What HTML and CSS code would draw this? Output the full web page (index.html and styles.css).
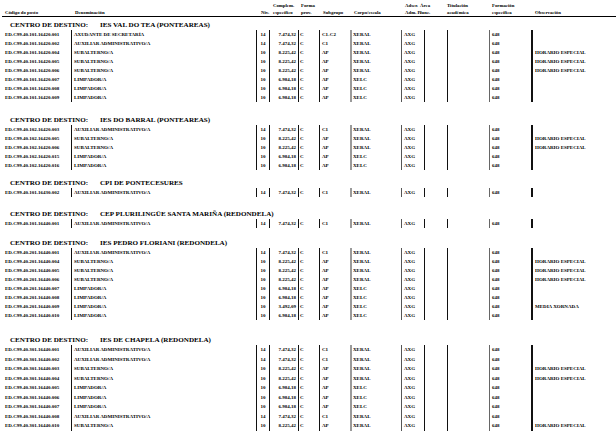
FILE: index.html
```html
<!DOCTYPE html>
<html lang="gl">
<head>
<meta charset="utf-8">
<title>Postos por centro de destino</title>
<link rel="stylesheet" href="styles.css">
</head>
<body>
<div class="page">
  <div class="head">
    <span class="h h-comp1">Complem.</span>
    <span class="h h-forma1">Forma</span>
    <span class="h h-adscr1">Adscr.</span>
    <span class="h h-area1">Área</span>
    <span class="h h-tit1">Titulación</span>
    <span class="h h-form1">Formación</span>
    <span class="h h-cod">Código do posto</span>
    <span class="h h-den">Denominación</span>
    <span class="h h-niv">Niv.</span>
    <span class="h h-comp2">específico</span>
    <span class="h h-forma2">prov.</span>
    <span class="h h-sub">Subgrupo</span>
    <span class="h h-corpo">Corpo/escala</span>
    <span class="h h-adscr2">Adm. P.</span>
    <span class="h h-area2">func.</span>
    <span class="h h-tit2">académica</span>
    <span class="h h-form2">específica</span>
    <span class="h h-obs">Observación</span>
  </div>

  <section class="group g1">
    <h2 class="title"><span class="label">CENTRO DE DESTINO:</span><span class="name">IES VAL DO TEA (PONTEAREAS)</span></h2>
    <div class="rows">
      <div class="c code">ED.C99.40.101.16420.001</div><div class="c den">AXUDANTE DE SECRETARÍA</div><div class="c niv">14</div><div class="c comp">7.474,32</div><div class="c forma">C</div><div class="c sub">C1-C2</div><div class="c corpo">XERAL</div><div class="c adscr">AXG</div><div class="c area"></div><div class="c tit"></div><div class="c form">648</div><div class="c obs"></div>
      <div class="c code">ED.C99.40.101.16420.002</div><div class="c den">AUXILIAR ADMINISTRATIVO/A</div><div class="c niv">14</div><div class="c comp">7.474,32</div><div class="c forma">C</div><div class="c sub">C1</div><div class="c corpo">XERAL</div><div class="c adscr">AXG</div><div class="c area"></div><div class="c tit"></div><div class="c form">648</div><div class="c obs"></div>
      <div class="c code">ED.C99.40.101.16420.004</div><div class="c den">SUBALTERNO/A</div><div class="c niv">10</div><div class="c comp">8.225,42</div><div class="c forma">C</div><div class="c sub">AP</div><div class="c corpo">XERAL</div><div class="c adscr">AXG</div><div class="c area"></div><div class="c tit"></div><div class="c form">648</div><div class="c obs">HORARIO ESPECIAL</div>
      <div class="c code">ED.C99.40.101.16420.005</div><div class="c den">SUBALTERNO/A</div><div class="c niv">10</div><div class="c comp">8.225,42</div><div class="c forma">C</div><div class="c sub">AP</div><div class="c corpo">XERAL</div><div class="c adscr">AXG</div><div class="c area"></div><div class="c tit"></div><div class="c form">648</div><div class="c obs">HORARIO ESPECIAL</div>
      <div class="c code">ED.C99.40.101.16420.006</div><div class="c den">SUBALTERNO/A</div><div class="c niv">10</div><div class="c comp">8.225,42</div><div class="c forma">C</div><div class="c sub">AP</div><div class="c corpo">XERAL</div><div class="c adscr">AXG</div><div class="c area"></div><div class="c tit"></div><div class="c form">648</div><div class="c obs">HORARIO ESPECIAL</div>
      <div class="c code">ED.C99.40.101.16420.007</div><div class="c den">LIMPADOR/A</div><div class="c niv">10</div><div class="c comp">6.984,18</div><div class="c forma">C</div><div class="c sub">AP</div><div class="c corpo">XELC</div><div class="c adscr">AXG</div><div class="c area"></div><div class="c tit"></div><div class="c form">648</div><div class="c obs"></div>
      <div class="c code">ED.C99.40.101.16420.008</div><div class="c den">LIMPADOR/A</div><div class="c niv">10</div><div class="c comp">6.984,18</div><div class="c forma">C</div><div class="c sub">AP</div><div class="c corpo">XELC</div><div class="c adscr">AXG</div><div class="c area"></div><div class="c tit"></div><div class="c form">648</div><div class="c obs"></div>
      <div class="c code">ED.C99.40.101.16420.009</div><div class="c den">LIMPADOR/A</div><div class="c niv">10</div><div class="c comp">6.984,18</div><div class="c forma">C</div><div class="c sub">AP</div><div class="c corpo">XELC</div><div class="c adscr">AXG</div><div class="c area"></div><div class="c tit"></div><div class="c form">648</div><div class="c obs"></div>
    </div>
  </section>

  <section class="group g2">
    <h2 class="title"><span class="label">CENTRO DE DESTINO:</span><span class="name">IES DO BARRAL (PONTEAREAS)</span></h2>
    <div class="rows">
      <div class="c code">ED.C99.40.102.16420.003</div><div class="c den">AUXILIAR ADMINISTRATIVO/A</div><div class="c niv">14</div><div class="c comp">7.474,32</div><div class="c forma">C</div><div class="c sub">C1</div><div class="c corpo">XERAL</div><div class="c adscr">AXG</div><div class="c area"></div><div class="c tit"></div><div class="c form">648</div><div class="c obs"></div>
      <div class="c code">ED.C99.40.102.16420.005</div><div class="c den">SUBALTERNO/A</div><div class="c niv">10</div><div class="c comp">8.225,42</div><div class="c forma">C</div><div class="c sub">AP</div><div class="c corpo">XERAL</div><div class="c adscr">AXG</div><div class="c area"></div><div class="c tit"></div><div class="c form">648</div><div class="c obs">HORARIO ESPECIAL</div>
      <div class="c code">ED.C99.40.102.16420.006</div><div class="c den">SUBALTERNO/A</div><div class="c niv">10</div><div class="c comp">8.225,42</div><div class="c forma">C</div><div class="c sub">AP</div><div class="c corpo">XERAL</div><div class="c adscr">AXG</div><div class="c area"></div><div class="c tit"></div><div class="c form">648</div><div class="c obs">HORARIO ESPECIAL</div>
      <div class="c code">ED.C99.40.102.16420.015</div><div class="c den">LIMPADOR/A</div><div class="c niv">10</div><div class="c comp">6.984,18</div><div class="c forma">C</div><div class="c sub">AP</div><div class="c corpo">XELC</div><div class="c adscr">AXG</div><div class="c area"></div><div class="c tit"></div><div class="c form">648</div><div class="c obs"></div>
      <div class="c code">ED.C99.40.102.16420.016</div><div class="c den">LIMPADOR/A</div><div class="c niv">10</div><div class="c comp">6.984,18</div><div class="c forma">C</div><div class="c sub">AP</div><div class="c corpo">XELC</div><div class="c adscr">AXG</div><div class="c area"></div><div class="c tit"></div><div class="c form">648</div><div class="c obs"></div>
    </div>
  </section>

  <section class="group g3">
    <h2 class="title"><span class="label">CENTRO DE DESTINO:</span><span class="name">CPI DE PONTECESURES</span></h2>
    <div class="rows">
      <div class="c code">ED.C99.40.101.16430.002</div><div class="c den">AUXILIAR ADMINISTRATIVO/A</div><div class="c niv">14</div><div class="c comp">7.474,32</div><div class="c forma">C</div><div class="c sub">C1</div><div class="c corpo">XERAL</div><div class="c adscr">AXG</div><div class="c area"></div><div class="c tit"></div><div class="c form">648</div><div class="c obs"></div>
    </div>
  </section>

  <section class="group g4">
    <h2 class="title"><span class="label">CENTRO DE DESTINO:</span><span class="name">CEP PLURILINGÜE SANTA MARIÑA (REDONDELA)</span></h2>
    <div class="rows">
      <div class="c code">ED.C99.40.101.16440.001</div><div class="c den">AUXILIAR ADMINISTRATIVO/A</div><div class="c niv">14</div><div class="c comp">7.474,32</div><div class="c forma">C</div><div class="c sub">C1</div><div class="c corpo">XERAL</div><div class="c adscr">AXG</div><div class="c area"></div><div class="c tit"></div><div class="c form">648</div><div class="c obs"></div>
    </div>
  </section>

  <section class="group g5">
    <h2 class="title"><span class="label">CENTRO DE DESTINO:</span><span class="name">IES PEDRO FLORIANI (REDONDELA)</span></h2>
    <div class="rows">
      <div class="c code">ED.C99.40.201.16440.001</div><div class="c den">AUXILIAR ADMINISTRATIVO/A</div><div class="c niv">14</div><div class="c comp">7.474,32</div><div class="c forma">C</div><div class="c sub">C1</div><div class="c corpo">XERAL</div><div class="c adscr">AXG</div><div class="c area"></div><div class="c tit"></div><div class="c form">648</div><div class="c obs"></div>
      <div class="c code">ED.C99.40.201.16440.004</div><div class="c den">SUBALTERNO/A</div><div class="c niv">10</div><div class="c comp">8.225,42</div><div class="c forma">C</div><div class="c sub">AP</div><div class="c corpo">XERAL</div><div class="c adscr">AXG</div><div class="c area"></div><div class="c tit"></div><div class="c form">648</div><div class="c obs">HORARIO ESPECIAL</div>
      <div class="c code">ED.C99.40.201.16440.005</div><div class="c den">SUBALTERNO/A</div><div class="c niv">10</div><div class="c comp">8.225,42</div><div class="c forma">C</div><div class="c sub">AP</div><div class="c corpo">XERAL</div><div class="c adscr">AXG</div><div class="c area"></div><div class="c tit"></div><div class="c form">648</div><div class="c obs">HORARIO ESPECIAL</div>
      <div class="c code">ED.C99.40.201.16440.006</div><div class="c den">SUBALTERNO/A</div><div class="c niv">10</div><div class="c comp">8.225,42</div><div class="c forma">C</div><div class="c sub">AP</div><div class="c corpo">XERAL</div><div class="c adscr">AXG</div><div class="c area"></div><div class="c tit"></div><div class="c form">648</div><div class="c obs">HORARIO ESPECIAL</div>
      <div class="c code">ED.C99.40.201.16440.007</div><div class="c den">LIMPADOR/A</div><div class="c niv">10</div><div class="c comp">6.984,18</div><div class="c forma">C</div><div class="c sub">AP</div><div class="c corpo">XELC</div><div class="c adscr">AXG</div><div class="c area"></div><div class="c tit"></div><div class="c form">648</div><div class="c obs"></div>
      <div class="c code">ED.C99.40.201.16440.008</div><div class="c den">LIMPADOR/A</div><div class="c niv">10</div><div class="c comp">6.984,18</div><div class="c forma">C</div><div class="c sub">AP</div><div class="c corpo">XELC</div><div class="c adscr">AXG</div><div class="c area"></div><div class="c tit"></div><div class="c form">648</div><div class="c obs"></div>
      <div class="c code">ED.C99.40.201.16440.009</div><div class="c den">LIMPADOR/A</div><div class="c niv">10</div><div class="c comp">3.492,09</div><div class="c forma">C</div><div class="c sub">AP</div><div class="c corpo">XELC</div><div class="c adscr">AXG</div><div class="c area"></div><div class="c tit"></div><div class="c form">648</div><div class="c obs">MEDIA XORNADA</div>
      <div class="c code">ED.C99.40.201.16440.010</div><div class="c den">LIMPADOR/A</div><div class="c niv">10</div><div class="c comp">6.984,18</div><div class="c forma">C</div><div class="c sub">AP</div><div class="c corpo">XELC</div><div class="c adscr">AXG</div><div class="c area"></div><div class="c tit"></div><div class="c form">648</div><div class="c obs"></div>
    </div>
  </section>

  <section class="group g6">
    <h2 class="title"><span class="label">CENTRO DE DESTINO:</span><span class="name">IES DE CHAPELA (REDONDELA)</span></h2>
    <div class="rows">
      <div class="c code">ED.C99.40.301.16440.001</div><div class="c den">AUXILIAR ADMINISTRATIVO/A</div><div class="c niv">14</div><div class="c comp">7.474,32</div><div class="c forma">C</div><div class="c sub">C1</div><div class="c corpo">XERAL</div><div class="c adscr">AXG</div><div class="c area"></div><div class="c tit"></div><div class="c form">648</div><div class="c obs"></div>
      <div class="c code">ED.C99.40.301.16440.002</div><div class="c den">AUXILIAR ADMINISTRATIVO/A</div><div class="c niv">14</div><div class="c comp">7.474,32</div><div class="c forma">C</div><div class="c sub">C1</div><div class="c corpo">XERAL</div><div class="c adscr">AXG</div><div class="c area"></div><div class="c tit"></div><div class="c form">648</div><div class="c obs"></div>
      <div class="c code">ED.C99.40.301.16440.003</div><div class="c den">SUBALTERNO/A</div><div class="c niv">10</div><div class="c comp">8.225,42</div><div class="c forma">C</div><div class="c sub">AP</div><div class="c corpo">XERAL</div><div class="c adscr">AXG</div><div class="c area"></div><div class="c tit"></div><div class="c form">648</div><div class="c obs">HORARIO ESPECIAL</div>
      <div class="c code">ED.C99.40.301.16440.004</div><div class="c den">SUBALTERNO/A</div><div class="c niv">10</div><div class="c comp">8.225,42</div><div class="c forma">C</div><div class="c sub">AP</div><div class="c corpo">XERAL</div><div class="c adscr">AXG</div><div class="c area"></div><div class="c tit"></div><div class="c form">648</div><div class="c obs">HORARIO ESPECIAL</div>
      <div class="c code">ED.C99.40.301.16440.005</div><div class="c den">LIMPADOR/A</div><div class="c niv">10</div><div class="c comp">6.984,18</div><div class="c forma">C</div><div class="c sub">AP</div><div class="c corpo">XELC</div><div class="c adscr">AXG</div><div class="c area"></div><div class="c tit"></div><div class="c form">648</div><div class="c obs"></div>
      <div class="c code">ED.C99.40.301.16440.006</div><div class="c den">LIMPADOR/A</div><div class="c niv">10</div><div class="c comp">6.984,18</div><div class="c forma">C</div><div class="c sub">AP</div><div class="c corpo">XELC</div><div class="c adscr">AXG</div><div class="c area"></div><div class="c tit"></div><div class="c form">648</div><div class="c obs"></div>
      <div class="c code">ED.C99.40.301.16440.007</div><div class="c den">LIMPADOR/A</div><div class="c niv">10</div><div class="c comp">6.984,18</div><div class="c forma">C</div><div class="c sub">AP</div><div class="c corpo">XELC</div><div class="c adscr">AXG</div><div class="c area"></div><div class="c tit"></div><div class="c form">648</div><div class="c obs"></div>
      <div class="c code">ED.C99.40.301.16440.008</div><div class="c den">AUXILIAR ADMINISTRATIVO/A</div><div class="c niv">14</div><div class="c comp">7.474,32</div><div class="c forma">C</div><div class="c sub">C1</div><div class="c corpo">XERAL</div><div class="c adscr">AXG</div><div class="c area"></div><div class="c tit"></div><div class="c form">648</div><div class="c obs"></div>
      <div class="c code">ED.C99.40.301.16440.010</div><div class="c den">SUBALTERNO/A</div><div class="c niv">10</div><div class="c comp">8.225,42</div><div class="c forma">C</div><div class="c sub">AP</div><div class="c corpo">XERAL</div><div class="c adscr">AXG</div><div class="c area"></div><div class="c tit"></div><div class="c form">648</div><div class="c obs">HORARIO ESPECIAL</div>
    </div>
  </section>
</div>
</body>
</html>
```

FILE: styles.css
```css
html, body {
  margin: 0;
  padding: 0;
  background: #fff;
}

body {
  font-family: "Liberation Serif", "Times New Roman", serif;
  color: #000;
}

.page {
  width: 616px;
  height: 439px;
  overflow: hidden;
}

/* column header */
.head {
  display: grid;
  grid-template-columns: 73px 186px 12px 28px 22px 31px 51px 15px 27px 45px 43px 83px;
  grid-template-rows: 8px 7px;
  padding-top: 1px;
  margin-left: 2px;
  border-bottom: 1px solid #000;
  font-size: 4.8px;
  font-weight: bold;
  line-height: 7px;
  white-space: nowrap;
}

.h { grid-row: 2; }
.h-comp1, .h-forma1, .h-adscr1, .h-area1, .h-tit1, .h-form1 { grid-row: 1; align-self: end; }

.h-cod { grid-column: 1; padding-left: 3px; }
.h-den { grid-column: 2; }
.h-niv { grid-column: 3; }
.h-comp1, .h-comp2 { grid-column: 4; }
.h-forma1, .h-forma2 { grid-column: 5; }
.h-sub { grid-column: 6; }
.h-corpo { grid-column: 7; }
.h-adscr1, .h-adscr2 { grid-column: 8; }
.h-area1, .h-area2 { grid-column: 9; }
.h-tit1, .h-tit2 { grid-column: 10; }
.h-form1, .h-form2 { grid-column: 11; }
.h-obs { grid-column: 12; }

/* group title */
.title {
  display: flex;
  margin: 0;
  padding-left: 10px;
  height: 10px;
  font-size: 7.1px;
  line-height: 10px;
  font-weight: bold;
  white-space: nowrap;
}

.title .label { width: 90px; }

.g1 { margin-top: 3px; }
.g2 { margin-top: 13px; }
.g3 { margin-top: 8px; }
.g4 { margin-top: 12px; }
.g5 { margin-top: 10px; }
.g6 { margin-top: 15px; }

/* data rows */
.rows {
  display: grid;
  grid-template-columns: 71px 185px 13px 29px 21px 31px 51px 23px 23px 42px 42px 85px;
  grid-auto-rows: 9px;
  font-size: 5px;
  font-weight: bold;
  line-height: 9px;
  white-space: nowrap;
}

.g6 .rows { grid-auto-rows: 9.5px; }

.c {
  box-sizing: border-box;
  border-left: 1px solid #111;
  padding-left: 2px;
  overflow: visible;
}

.code { border-left: none; padding-left: 5px; }
.niv { text-align: center; padding-left: 0; }
.comp { text-align: right; padding-right: 2px; }
.forma { padding-left: 1px; }
.corpo { border-left: 2px solid #9a9a9a; padding-left: 1px; }
.adscr { border-left-color: #555; }
.form { border-left-color: #666; }
.obs { border-left: 2px solid #111; padding-left: 2px; }
```
